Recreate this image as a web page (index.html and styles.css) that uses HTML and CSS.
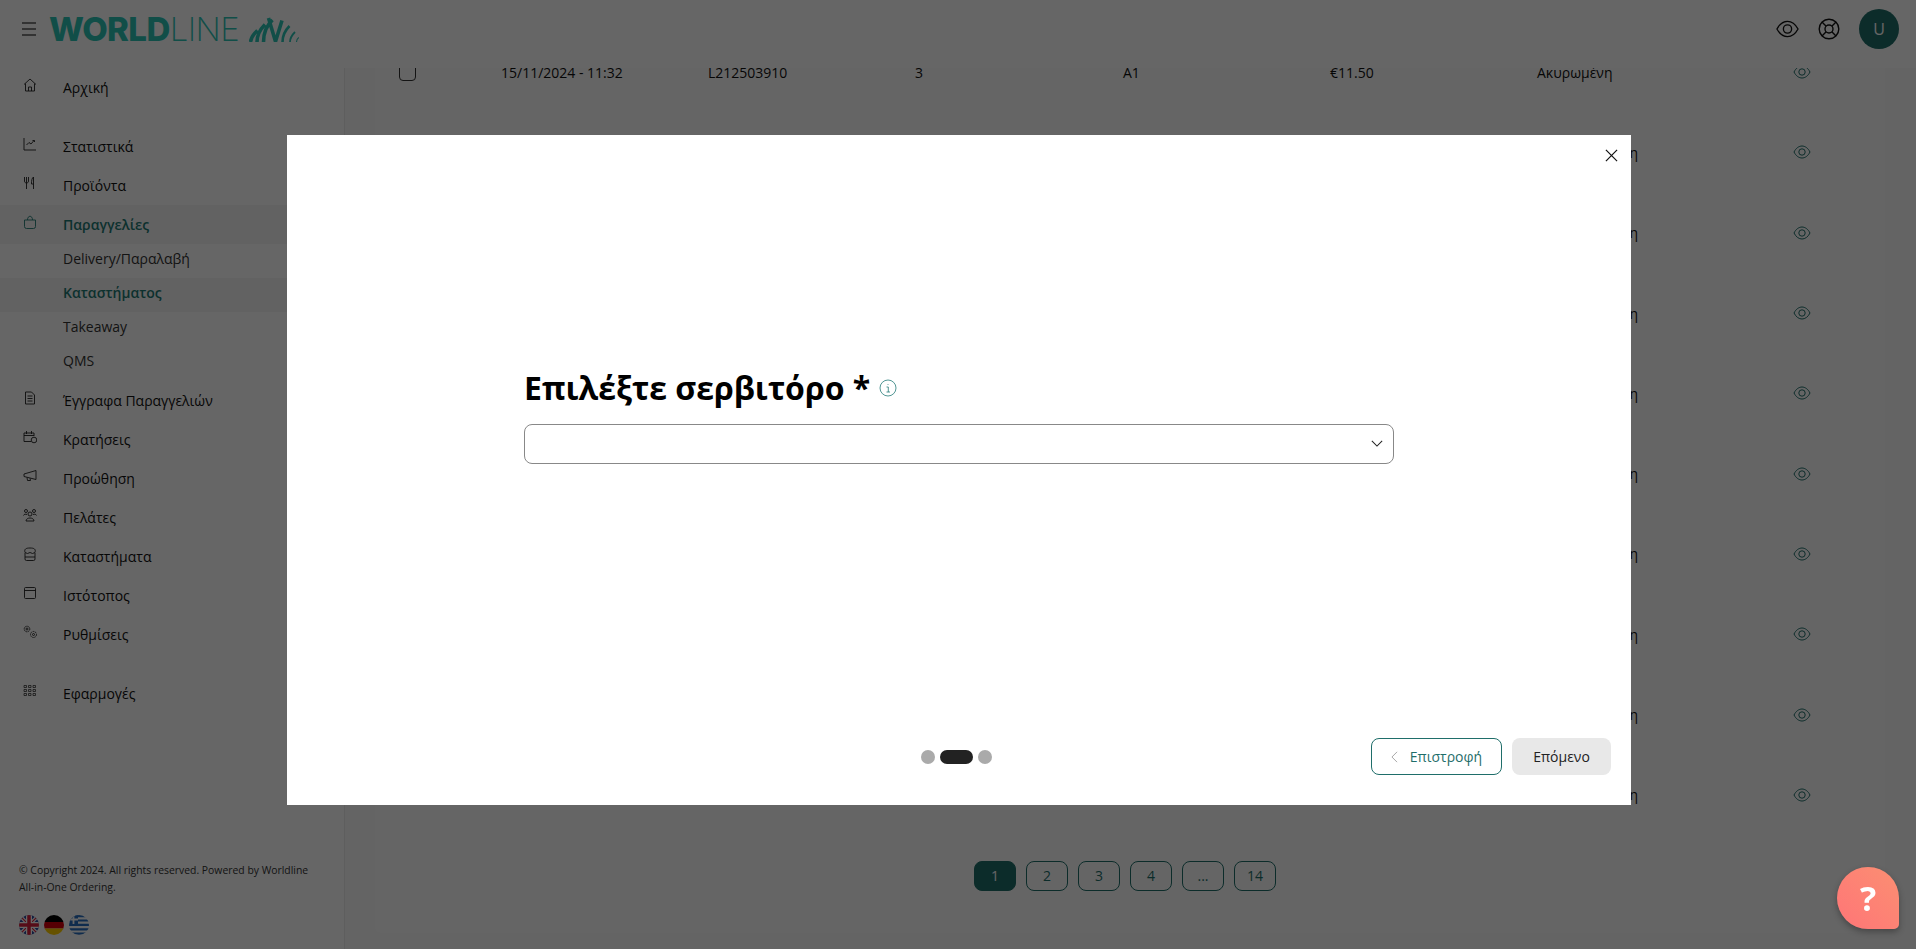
FILE: index.html
```html
<!DOCTYPE html>
<html lang="el">
<head>
<meta charset="utf-8">
<title>Worldline</title>
<link rel="stylesheet" href="styles.css">
</head>
<body>
<div class="app">
  <header class="topbar">
    <svg class="burger" viewBox="0 0 14 14"><path d="M0 1h14M0 7h14M0 13h14"/></svg>
    <div class="logo"><span class="logo-b">WORLD</span><span class="logo-l">LINE</span></div>
    <svg class="logo-mark" viewBox="0 0 50 25">
      <path class="m1" d="M1.500 25C2 20.500 4.500 17 8.500 13.500M8 25C8 18.500 11 12.500 16 7.500M14.500 25C14.500 16 18 8 23.500 3M19.500 1L26.500 24.500L33 3.500"/>
      <path class="m2" d="M33.500 25C33.500 19 36 13.500 40.500 9"/>
      <path class="m3" d="M41 25C41 21.500 43 18 46 15"/>
      <path class="m4" d="M47.500 25C47.500 23.500 48.500 21.500 49.800 20.500"/>
    </svg>
    <div class="top-actions">
      <svg class="top-eye" viewBox="0 0 24 18"><path d="M1 9C4 3.500 8 1 12 1s8 2.500 11 8c-3 5.500-7 8-11 8S4 14.500 1 9z"/><circle cx="12" cy="9" r="4.300"/></svg>
      <svg class="top-buoy" viewBox="0 0 22 22"><circle cx="11" cy="11" r="9.800"/><circle cx="11" cy="11" r="4"/><path d="M4 4l4.200 4.200M18 4l-4.200 4.200M4 18l4.200-4.200M18 18l-4.200-4.200"/></svg>
      <div class="avatar">U</div>
    </div>
  </header>
  <div class="layout">
    <aside class="sidebar">
      <nav class="nav">
        <a class="nav-item"><svg class="ico" viewBox="0 0 14 14"><path d="M1 6.500L7 1l6 5.500M2.500 5.500V13h9V5.500M5.500 13V9h3v4"/></svg><span>Αρχική</span></a>
        <a class="nav-item gap"><svg class="ico" viewBox="0 0 14 14"><path d="M1 1v12h12M3.500 8L6 5.500l2 1.500 3-3.500M9.500 3.500H11.500V5"/></svg><span>Στατιστικά</span></a>
        <a class="nav-item"><svg class="ico" viewBox="0 0 14 14"><path d="M1.500 1v4c0 1.500 1 2 2 2s2-.5 2-2V1M3.500 1v12M10.500 13V1C9 2 8.500 4 8.500 8h2"/></svg><span>Προϊόντα</span></a>
        <a class="nav-item open"><svg class="ico" viewBox="0 0 14 14"><path d="M1.500 5h11v6.500a2 2 0 0 1-2 2h-7a2 2 0 0 1-2-2zM4.500 5c0-5 5-5 5 0"/></svg><span>Παραγγελίες</span></a>
        <a class="nav-sub">Delivery/Παραλαβή</a>
        <a class="nav-sub current">Καταστήματος</a>
        <a class="nav-sub">Takeaway</a>
        <a class="nav-sub">QMS</a>
        <a class="nav-item"><svg class="ico" viewBox="0 0 14 14"><path d="M2.500 1h6l3 3v9h-9zM4.500 5h5M4.500 7.500h5M4.500 10h5"/></svg><span>Έγγραφα Παραγγελιών</span></a>
        <a class="nav-item"><svg class="ico" viewBox="0 0 14 14"><path d="M8 11.500H1V3h10v3M1 5.500h10M3.500 1v3M8.500 1v3"/><circle cx="11" cy="10" r="2.800"/></svg><span>Κρατήσεις</span></a>
        <a class="nav-item"><svg class="ico" viewBox="0 0 14 14"><path d="M13 1.500v9L1 7.500V5zM4 8.500l.5 3h3l-.5-2.200"/></svg><span>Προώθηση</span></a>
        <a class="nav-item"><svg class="ico" viewBox="0 0 14 14"><circle cx="3" cy="3" r="1.500"/><circle cx="11" cy="3" r="1.500"/><circle cx="7" cy="6" r="2"/><path d="M.5 7.500C1 6 2.500 6 4 6.500M13.500 7.500C13 6 11.500 6 10 6.500M3 13c0-4 8-4 8 0z"/></svg><span>Πελάτες</span></a>
        <a class="nav-item"><svg class="ico" viewBox="0 0 14 14"><path d="M2 5.500C1 2 3 1 7 1s6 1 5 4.500l-2.500 1L7 5.500l-2.500 1zM2 6v6a1.500 1.500 0 0 0 1.500 1.500h7A1.500 1.500 0 0 0 12 12V6M2 10h10"/></svg><span>Καταστήματα</span></a>
        <a class="nav-item"><svg class="ico" viewBox="0 0 14 14"><rect x="1.500" y="1.500" width="11" height="11" rx="1"/><path d="M1.500 4.500h11"/></svg><span>Ιστότοπος</span></a>
        <a class="nav-item"><svg class="ico" viewBox="0 0 14 14"><circle cx="4" cy="4" r="2.800" stroke-dasharray="1.500 .7"/><circle cx="4" cy="4" r="1"/><circle cx="10.500" cy="9.500" r="3" stroke-dasharray="1.500 .7"/><circle cx="10.500" cy="9.500" r="1"/></svg><span>Ρυθμίσεις</span></a>
        <a class="nav-item gap"><svg class="ico grid-ico" viewBox="0 0 14 14"><path d="M1 1.500h2.500v2H1zM5.500 1.500H8v2H5.500zM10 1.500h2.500v2H10zM1 5.500h2.500v2H1zM5.500 5.500H8v2H5.500zM10 5.500h2.500v2H10zM1 9.500h2.500v2H1zM5.500 9.500H8v2H5.500zM10 9.500h2.500v2H10z"/></svg><span>Εφαρμογές</span></a>
      </nav>
      <div class="side-foot">
        <p class="copy">© Copyright 2024. All rights reserved. Powered by Worldline All-in-One Ordering.</p>
        <div class="flags">
          <svg class="flag" viewBox="0 0 20 20"><defs><clipPath id="c1"><circle cx="10" cy="10" r="10"/></clipPath></defs><g clip-path="url(#c1)"><rect width="20" height="20" fill="#2a4a9e"/><path d="M0 0L20 20M20 0L0 20" stroke="#fff" stroke-width="3.500"/><path d="M0 0L20 20M20 0L0 20" stroke="#d8203c" stroke-width="1.200"/><path d="M10 0V20M0 10H20" stroke="#fff" stroke-width="6"/><path d="M10 0V20M0 10H20" stroke="#d8203c" stroke-width="3.500"/></g></svg>
          <svg class="flag" viewBox="0 0 20 20"><defs><clipPath id="c2"><circle cx="10" cy="10" r="10"/></clipPath></defs><g clip-path="url(#c2)"><rect width="20" height="7" fill="#000"/><rect y="7" width="20" height="6.500" fill="#d8000c"/><rect y="13.500" width="20" height="6.500" fill="#ffce00"/></g></svg>
          <svg class="flag" viewBox="0 0 20 20"><defs><clipPath id="c3"><circle cx="10" cy="10" r="10"/></clipPath></defs><g clip-path="url(#c3)"><rect width="20" height="20" fill="#fff"/><path d="M0 1.100H20M0 5.500H20M0 9.900H20M0 14.300H20M0 18.700H20" stroke="#2a6fc0" stroke-width="2.200"/><rect width="9" height="9" fill="#2a6fc0"/><path d="M4.500 0V9M0 4.500H9" stroke="#fff" stroke-width="1.800"/></g></svg>
        </div>
      </div>
    </aside>
    <main class="main">
      <section class="card">
        <div class="rows">
          <div class="row"><span class="check"></span><span>15/11/2024 - 11:32</span><span>L212503910</span><span>3</span><span>A1</span><span>€11.50</span><span>Ακυρωμένη</span><svg class="eye" viewBox="0 0 18 14"><use href="#eye-shape"/></svg></div>
          <div class="row"><span></span><span></span><span></span><span></span><span></span><span></span><span>Ολοκληρωμένη</span><svg class="eye" viewBox="0 0 18 14"><use href="#eye-shape"/></svg></div>
          <div class="row"><span></span><span></span><span></span><span></span><span></span><span></span><span>Ολοκληρωμένη</span><svg class="eye" viewBox="0 0 18 14"><use href="#eye-shape"/></svg></div>
          <div class="row"><span></span><span></span><span></span><span></span><span></span><span></span><span>Ολοκληρωμένη</span><svg class="eye" viewBox="0 0 18 14"><use href="#eye-shape"/></svg></div>
          <div class="row"><span></span><span></span><span></span><span></span><span></span><span></span><span>Ολοκληρωμένη</span><svg class="eye" viewBox="0 0 18 14"><use href="#eye-shape"/></svg></div>
          <div class="row"><span></span><span></span><span></span><span></span><span></span><span></span><span>Ολοκληρωμένη</span><svg class="eye" viewBox="0 0 18 14"><use href="#eye-shape"/></svg></div>
          <div class="row"><span></span><span></span><span></span><span></span><span></span><span></span><span>Ολοκληρωμένη</span><svg class="eye" viewBox="0 0 18 14"><use href="#eye-shape"/></svg></div>
          <div class="row"><span></span><span></span><span></span><span></span><span></span><span></span><span>Ολοκληρωμένη</span><svg class="eye" viewBox="0 0 18 14"><use href="#eye-shape"/></svg></div>
          <div class="row"><span></span><span></span><span></span><span></span><span></span><span></span><span>Ολοκληρωμένη</span><svg class="eye" viewBox="0 0 18 14"><use href="#eye-shape"/></svg></div>
          <div class="row"><span></span><span></span><span></span><span></span><span></span><span></span><span>Ολοκληρωμένη</span><svg class="eye" viewBox="0 0 18 14"><use href="#eye-shape"/></svg></div>
        </div>
        <div class="pager">
          <a class="page on">1</a><a class="page">2</a><a class="page">3</a><a class="page">4</a><a class="page">...</a><a class="page">14</a>
        </div>
      </section>
    </main>
  </div>
</div>

<svg class="defs" width="0" height="0"><symbol id="eye-shape" viewBox="0 0 18 14"><path d="M1 7C3 3 6 1 9 1s6 2 8 6c-2 4-5 6-8 6S3 11 1 7z"/><circle cx="9" cy="7" r="3.200"/></symbol></svg>

<div class="backdrop">
  <div class="modal">
    <svg class="close" viewBox="0 0 14 14"><path d="M1 1l12 12M13 1L1 13"/></svg>
    <div class="modal-body">
      <div class="field">
        <div class="field-title">
          <h2>Επιλέξτε σερβιτόρο *</h2>
          <svg class="info" viewBox="0 0 18 18"><circle cx="9" cy="9" r="8"/><path d="M7.500 8H9.300V13M7.500 13H11M9 5v.8"/></svg>
        </div>
        <div class="select"><svg class="chev" viewBox="0 0 14 8"><path d="M1 1l6 6 6-6"/></svg></div>
      </div>
    </div>
    <div class="modal-foot">
      <div class="dots"><i class="dot"></i><i class="dot wide"></i><i class="dot"></i></div>
      <div class="btns">
        <button class="btn back"><svg class="back-ico" viewBox="0 0 8 14"><path d="M7 1L1 7l6 6"/></svg>Επιστροφή</button>
        <button class="btn next">Επόμενο</button>
      </div>
    </div>
  </div>
</div>
<div class="help">?</div>
</body>
</html>
```

FILE: styles.css
```css
* { box-sizing: border-box; }
html, body { margin: 0; height: 100%; overflow: hidden; }
body { font-family: "Open Sans", "Liberation Sans", sans-serif; font-size: 14px; color: #111; background: #fff; }
svg { display: block; fill: none; }
.defs { position: absolute; }

.app { height: 949px; display: flex; flex-direction: column; }
.topbar { height: 68px; flex: none; display: flex; align-items: center; padding: 0 17px 10px 22px; background: #fff; position: relative; z-index: 2; }
.burger { width: 14px; height: 14px; stroke: #000; stroke-width: 1.1; margin-right: 13px; }
.logo { font-family: Inter, "Liberation Sans", sans-serif; font-size: 33px; line-height: 1; color: #2cc4b4; letter-spacing: -.6px; }
.logo-b { font-weight: 800; }
.logo-l { font-weight: 200; }
.logo-mark { width: 50px; height: 25px; margin-left: 10px; stroke: #2cc4b4; }
.m1 { stroke-width: 3.6; }
.m2 { stroke-width: 2.6; }
.m3 { stroke-width: 1.8; }
.m4 { stroke-width: 1.1; }
.top-actions { margin-left: auto; display: flex; align-items: center; }
.top-eye { width: 23px; height: 18px; stroke: #111; stroke-width: 1.4; }
.top-buoy { width: 22px; height: 22px; margin-left: 19px; stroke: #111; stroke-width: 1.4; }
.avatar { width: 40px; height: 40px; margin-left: 19px; border-radius: 50%; background: #1f6e6a; color: #fff; display: flex; align-items: center; justify-content: center; font-size: 16px; }

.layout { flex: 1; min-height: 0; display: flex; }
.sidebar { width: 345px; flex: none; background: #fff; border-right: 1px solid #ececec; display: flex; flex-direction: column; }
.nav { display: flex; flex-direction: column; }
.nav-item { height: 39px; display: flex; align-items: center; padding-left: 23px; color: #111; }
.nav-item.gap { margin-top: 20px; }
.nav-item.open { background: #f4f4f4; color: #1f7a74; font-weight: 600; }
.ico { width: 14px; height: 14px; margin-right: 26px; margin-bottom: 6px; stroke: #222; stroke-width: .9; }
.grid-ico { stroke-width: .7; }
.nav-item.open .ico { stroke: #1f7a74; }
.nav-sub { height: 34px; display: flex; align-items: center; padding: 0 0 5px 63px; color: #333; }
.nav-sub.current { background: #f4f4f4; color: #1f7a74; font-weight: 600; }
.nav-sub + .nav-item { margin-top: 1px; }
.side-foot { margin-top: auto; padding: 0 25px 14px 19px; }
.copy { margin: 0; font-size: 10.4px; line-height: 17px; color: #333; }
.flags { display: flex; gap: 5px; margin-top: 19px; }
.flag { width: 20px; height: 20px; }

.main { flex: 1; min-width: 0; background: #f9f9f9; padding: 0 31px 16px 30px; overflow: hidden; display: flex; flex-direction: column; }
.card { flex: 1; min-height: 0; background: #fdfdfd; overflow: hidden; border-radius: 0 0 6px 6px; }
.rows { margin-top: -36px; }
.row { height: 80.3px; display: grid; grid-template-columns: 102px 207px 207px 208px 207px 207px 256px 18px; align-items: center; padding-left: 24px; color: #111; }
.check { width: 17px; height: 17px; border: 1px solid #333; border-radius: 4px; }
.eye { width: 18px; height: 14px; stroke: #1f6e6a; stroke-width: 1; }
.pager { display: flex; gap: 10px; margin-top: 26px; padding-left: 599px; }
.page { width: 42px; height: 30px; display: flex; align-items: center; justify-content: center; border: 1px solid #1f6e6a; border-radius: 8px; color: #1f6e6a; }
.page.on { background: #1f6e6a; color: #fff; }

.backdrop { position: fixed; inset: 0; background: rgba(0,0,0,.6); z-index: 10; display: flex; justify-content: center; align-items: flex-start; padding: 135px 0 0 2px; }
.modal { position: relative; width: 1344px; height: 670px; background: #fff; display: flex; flex-direction: column; }
.close { position: absolute; top: 14px; left: 1318px; width: 13px; height: 13px; stroke: #111; stroke-width: 1.300; }
.modal-body { flex: 1; display: flex; align-items: center; padding: 0 237px 44px 237px; }
.field { width: 100%; }
.field-title { display: flex; align-items: center; gap: 9px; }
.field-title h2 { margin: 0; font-size: 32px; line-height: 44px; font-weight: 700; color: #000; }
.info { width: 18px; height: 18px; stroke: #267b78; stroke-width: .8; }
.select { height: 40px; margin-top: 14px; border: 1px solid #888; border-radius: 8px; display: flex; align-items: center; justify-content: flex-end; padding-right: 10px; }
.chev { width: 12px; height: 7px; stroke: #222; stroke-width: 1.200; }
.modal-foot { height: 67px; flex: none; display: flex; align-items: flex-start; padding: 0 20px 0 634px; }
.dots { display: flex; align-items: center; gap: 5px; margin-top: 12px; }
.dot { width: 14px; height: 14px; border-radius: 7px; background: #aaa; }
.dot.wide { width: 33px; background: #222; }
.btns { margin-left: auto; display: flex; gap: 10px; }
.btn { height: 37px; border-radius: 8px; font: 14px "Open Sans", "Liberation Sans", sans-serif; display: flex; align-items: center; justify-content: center; padding: 0; }
.back { width: 131px; background: #fff; border: 1px solid #1f6e6a; color: #1f6e6a; gap: 12px; }
.next { width: 99px; background: #e8e8e8; border: 0; color: #222; }
.back-ico { width: 7px; height: 12px; stroke: #999; stroke-width: 1; }

.help { position: fixed; left: 1837px; top: 867px; width: 62px; height: 62px; z-index: 20; border-radius: 50% 50% 5px 50%; background: linear-gradient(45deg, #ff7577, #fb8f72); color: #fff; font-size: 34px; font-weight: 700; display: flex; align-items: center; justify-content: center; box-shadow: 0 3px 6px rgba(0,0,0,.3); }
```
